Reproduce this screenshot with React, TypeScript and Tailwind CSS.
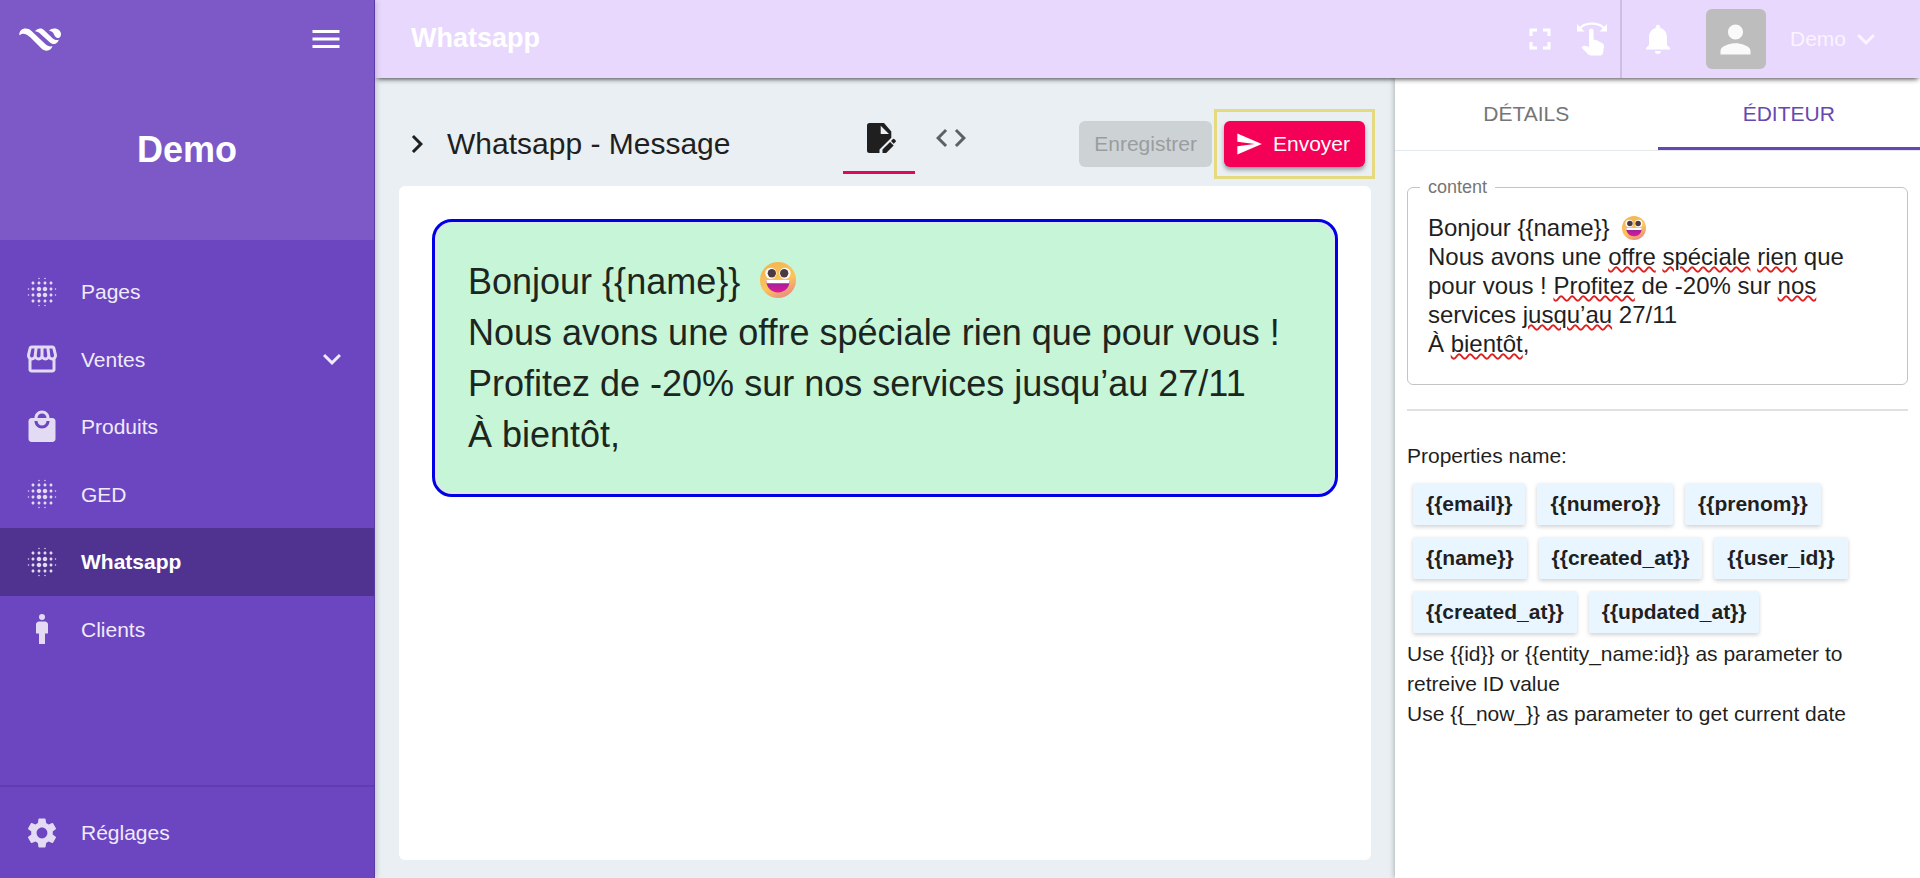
import React, { useState } from 'react';
import {
  MdBlurOn,
  MdChevronRight,
  MdCode,
  MdExpandMore,
  MdFullscreen,
  MdLocalMall,
  MdMan,
  MdMenu,
  MdNotifications,
  MdOutlineStorefront,
  MdPerson,
  MdSend,
  MdSettings,
  MdSwipe,
} from 'react-icons/md';
import type { IconType } from 'react-icons';

type NavItem = {
  label: string;
  icon: IconType;
  hasChildren?: boolean;
};

const navItems: NavItem[] = [
  { label: 'Pages', icon: MdBlurOn },
  { label: 'Ventes', icon: MdOutlineStorefront, hasChildren: true },
  { label: 'Produits', icon: MdLocalMall },
  { label: 'GED', icon: MdBlurOn },
  { label: 'Whatsapp', icon: MdBlurOn },
  { label: 'Clients', icon: MdMan },
];

const properties = [
  'email',
  'numero',
  'prenom',
  'name',
  'created_at',
  'user_id',
  'created_at',
  'updated_at',
];

const initialMessage =
  'Bonjour {{name}} 😀\nNous avons une offre spéciale rien que pour vous ! Profitez de -20% sur nos services jusqu’au 27/11\nÀ bientôt,';

const misspelled = ['offre', 'spéciale', 'rien', 'Profitez', 'nos', 'jusqu’au', 'bientôt'];

const Logo = () => (
  <svg viewBox="0 0 42 23" className="w-[42px] h-[23px]" fill="#fff" aria-hidden="true">
    <path d="M.3 7.3C0 3 3 .5 6.500.5c2.500 0 4 .7 6 2.500L26 15.800c2.500 2.300 4.500 3 7.500 2.500-1 2.500-3 4.400-5.800 4.400-2.200 0-4-.9-5.700-2.700L11.500 9.500C7.500 5.600 3.500 4.400.3 7.300z" />
    <path d="M16 3.200C17.500 1.300 19.300.5 21.200.5c1.600 0 2.800.6 4 1.800l8.300 8c1.900 1.700 3.700 2.200 6.300 1.500-.8 2.500-2.600 4.200-4.900 4.200-1.600 0-2.900-.6-4.200-1.800L21 5.500c-1.500-1.400-3-2.200-5-2.300z" />
    <path d="M30 2.800C31.500 1.200 33.300.4 35.400.4c3.900 0 6.600 2.500 6.600 5.800 0 1.700-.8 3.100-2.300 3.900-1.400 0-2.700-.5-3.500-1.500-.9-1.100-.9-2.400-2-3.700-1-1.200-2.300-1.800-4.200-2.100z" />
  </svg>
);

const FileEditIcon = () => (
  <svg viewBox="-6 -3 36 36" className="size-9" fill="currentColor" aria-hidden="true">
    <path
      fillRule="evenodd"
      d="M2.500 0H17l7.300 8.500v6.300L12.500 26.500V30h-10A2.500 2.500 0 0 1 0 27.500v-25A2.500 2.500 0 0 1 2.500 0zm11.200 2.700V11h8.300z"
    />
    <path d="M15.500 30v-3.600l7.600-7.500 3.600 3.600-7.500 7.500z" />
    <path d="M24 18l2-2q.6-.5 1.200 0l1.500 1.500q.6.6 0 1.200l-2 2z" />
  </svg>
);

const Smiley = ({ className }: { className: string }) => (
  <svg viewBox="0 0 32 32" className={className} role="img" aria-label="😀">
    <defs>
      <linearGradient id="face" x1="0.2" y1="0" x2="0.7" y2="1">
        <stop offset="0" stopColor="#f3b552" />
        <stop offset="0.6" stopColor="#fcc45a" />
        <stop offset="1" stopColor="#e88a86" />
      </linearGradient>
      <linearGradient id="mouth" x1="0" y1="0" x2="0" y2="1">
        <stop offset="0" stopColor="#8a2299" />
        <stop offset="1" stopColor="#e0189a" />
      </linearGradient>
    </defs>
    <circle cx="16" cy="16" r="16" fill="url(#face)" />
    <circle cx="9.7" cy="10" r="5" fill="#fff" />
    <circle cx="22.2" cy="10" r="5" fill="#fff" />
    <circle cx="10.5" cy="10" r="3.7" fill="#4a3a42" />
    <circle cx="21.5" cy="10" r="3.7" fill="#4a3a42" />
    <path d="M5.500 16h21c0 6.500-4.500 11-10.500 11S5.500 22.500 5.500 16z" fill="url(#mouth)" />
    <path d="M5.500 16h21l-.5 2.800H6z" fill="#fff" />
  </svg>
);

const Sidebar = () => (
  <aside className="w-[375px] shrink-0 flex flex-col bg-[#6b46c0] text-white border-r border-[#5a3ba6] shadow-[1px_0_6px_rgba(0,0,0,0.2)] z-20">
    <div className="h-60 flex flex-col bg-[#7c59c7]">
      <div className="h-[78px] flex items-center justify-between pl-[19px] pr-[30px]">
        <a href="#" aria-label="Accueil">
          <Logo />
        </a>
        <button type="button" aria-label="Menu">
          <MdMenu className="size-9" />
        </button>
      </div>
      <h2 className="pt-[51px] text-center text-4xl leading-[42px] font-bold">Demo</h2>
    </div>
    <nav className="mt-[18px] h-[405px] grid auto-rows-fr">
      {navItems.map(({ label, icon: Icon, hasChildren }) => (
        <a
          key={label}
          href="#"
          className={`flex items-center pl-6 pr-6 text-[21px] ${
            label === 'Whatsapp' ? 'bg-[#503390] font-bold' : 'text-[#f0eafa]'
          }`}
        >
          <Icon className="size-9 mr-[21px] text-[#e3daf4]" />
          <span className="flex-1">{label}</span>
          {hasChildren && <MdExpandMore className="size-9" />}
        </a>
      ))}
    </nav>
    <a
      href="#"
      className="mt-auto h-[93px] flex items-center pl-6 border-t-2 border-[#5f3db0] text-[21px] text-[#f0eafa]"
    >
      <MdSettings className="size-9 mr-[21px] text-[#e3daf4]" />
      Réglages
    </a>
  </aside>
);

const Header = () => (
  <header className="h-[78px] shrink-0 flex items-center bg-[#e9d8fe] text-white shadow-[0_3px_5px_-2px_rgba(0,0,0,0.75)] z-10">
    <h1 className="flex-1 pl-9 pb-[2px] text-[27px] font-bold">Whatsapp</h1>
    <button type="button" aria-label="Plein écran" className="mr-4">
      <MdFullscreen className="size-9" />
    </button>
    <button type="button" aria-label="Glisser" className="mr-[10px]">
      <MdSwipe className="size-9" />
    </button>
    <div className="self-stretch flex items-center border-l-2 border-[#d0bde6] pl-[18px]">
      <button type="button" aria-label="Notifications">
        <MdNotifications className="size-9" />
      </button>
      <div className="ml-[30px] size-[60px] rounded-md bg-[#bdbdbd] flex items-center justify-center">
        <MdPerson className="size-[45px] text-[#fafafa]" />
      </div>
      <button type="button" className="ml-6 mr-9 flex items-center gap-[2px] text-[21px] text-[#f9f4ff]">
        Demo
        <MdExpandMore className="size-9" />
      </button>
    </div>
  </header>
);

const Toolbar = () => (
  <div className="h-27 pt-6 flex items-center">
    <button type="button" aria-label="Ouvrir" className="mr-3">
      <MdChevronRight className="size-9" />
    </button>
    <h2 className="flex-1 text-3xl">Whatsapp - Message</h2>
    <div className="self-end mb-3 mr-23 flex">
      <button
        type="button"
        aria-label="Éditer"
        className="w-[72px] h-[72px] flex items-center justify-center border-b-3 border-[#e0085c] pt-[3px]"
      >
        <FileEditIcon />
      </button>
      <button
        type="button"
        aria-label="Code"
        className="w-[72px] h-[72px] flex items-center justify-center text-[#5c6163]"
      >
        <MdCode className="size-9" />
      </button>
    </div>
    <button
      type="button"
      disabled
      className="h-[46px] px-[15px] rounded-md bg-[#cdd2d5] text-[21px] text-[#9a9da0]"
    >
      Enregistrer
    </button>
    <div className="ml-[2px] -mr-1 border-3 border-[#e6da80] px-[7px] py-[9px]">
      <button
        type="button"
        className="h-[46px] pl-[11px] pr-[15px] flex items-center rounded-md bg-[#f50057] text-white text-[21px] shadow-[0_3px_4px_rgba(0,0,0,0.35)]"
      >
        <MdSend className="size-7 mr-[10px]" />
        Envoyer
      </button>
    </div>
  </div>
);

const Preview = ({ message }: { message: string }) => (
  <div className="flex-1 rounded-md bg-white p-[33px]">
    <div className="rounded-[20px] border-3 border-[#0000e6] bg-[#c7f5d7] shadow-[inset_0_0_0_2px_#dfe6ec] px-[33px] py-[34px] text-4xl leading-[51px] text-[#1c2620] whitespace-pre-wrap">
      {message.split('😀').map((part, i) => (
        <React.Fragment key={i}>
          {i > 0 && <Smiley className="inline-block size-9 mx-[10px] -mt-2" />}
          {part}
        </React.Fragment>
      ))}
    </div>
  </div>
);

// The textarea keeps the caret and value, the layer behind it draws the marks
const ContentField = ({ value, onChange }: { value: string; onChange: (v: string) => void }) => (
  <fieldset className="rounded-md border border-[#c4c4c4] px-3 pb-[25px]">
    <legend className="px-2 text-lg leading-5 text-[#757575]">
      <label htmlFor="content">content</label>
    </legend>
    <div className="grid mt-4 pb-px px-2 text-2xl leading-[29px]">
      <div aria-hidden="true" className="col-start-1 row-start-1 whitespace-pre-wrap">
        {value.split(/(\s|😀|,)/).map((word, i) => {
          if (word === '😀') return <Smiley key={i} className="inline-block size-6 mx-[6px] -mt-1" />;
          if (misspelled.includes(word)) {
            return (
              <span key={i} className="underline decoration-wavy decoration-2 decoration-[#e02020] underline-offset-1">
                {word}
              </span>
            );
          }
          return word;
        })}
      </div>
      <textarea
        id="content"
        rows={5}
        spellCheck={false}
        value={value}
        onChange={e => onChange(e.target.value)}
        className="col-start-1 row-start-1 block w-full resize-none overflow-hidden bg-transparent text-transparent caret-black outline-none"
      />
    </div>
  </fieldset>
);

const EditorPanel = ({ value, onChange }: { value: string; onChange: (v: string) => void }) => (
  <aside className="w-[525px] shrink-0 bg-white shadow-[-1px_0_5px_rgba(0,0,0,0.25)]">
    <div role="tablist" className="grid grid-cols-2 border-b border-[#e4e9ed] text-[21px]">
      <button type="button" role="tab" className="h-[72px] pb-3 pt-3 text-[#757575]">
        DÉTAILS
      </button>
      <button
        type="button"
        role="tab"
        aria-selected="true"
        className="h-[72px] pb-[9px] pt-3 border-b-3 border-[#6648b0] text-[#6648b0]"
      >
        ÉDITEUR
      </button>
    </div>
    <div className="pl-3 pr-3 pt-[26px] text-[21px] leading-[30px]">
      <ContentField value={value} onChange={onChange} />
      <hr className="mt-6 mb-[30px] border-t-2 border-[#e0e0e0]" />
      <p>Properties name:</p>
      <div className="flex flex-wrap gap-3 pt-3 pb-1.5 pl-1.5">
        {properties.map((name, i) => (
          <button
            key={i}
            type="button"
            className="h-[42px] px-[13px] rounded-xs bg-[#eaf6ff] font-bold shadow-[0_2px_4px_rgba(0,0,0,0.18)]"
            onClick={() => onChange(`${value}{{${name}}}`)}
          >
            {`{{${name}}}`}
          </button>
        ))}
      </div>
      <p>{'Use {{id}} or {{entity_name:id}} as parameter to retreive ID value'}</p>
      <p>{'Use {{_now_}} as parameter to get current date'}</p>
    </div>
  </aside>
);

const App = () => {
  const [message, setMessage] = useState(initialMessage);

  return (
    <div className="min-h-screen flex bg-[#e9eff3] font-['Liberation_Sans',Arial,sans-serif] text-[#1f1f1f]">
      <Sidebar />
      <div className="flex-1 min-w-0 flex flex-col">
        <Header />
        <div className="flex-1 flex">
          <main className="flex-1 min-w-0 flex flex-col px-6 pb-[18px]">
            <Toolbar />
            <Preview message={message} />
          </main>
          <EditorPanel value={message} onChange={setMessage} />
        </div>
      </div>
    </div>
  );
};

export default App;
